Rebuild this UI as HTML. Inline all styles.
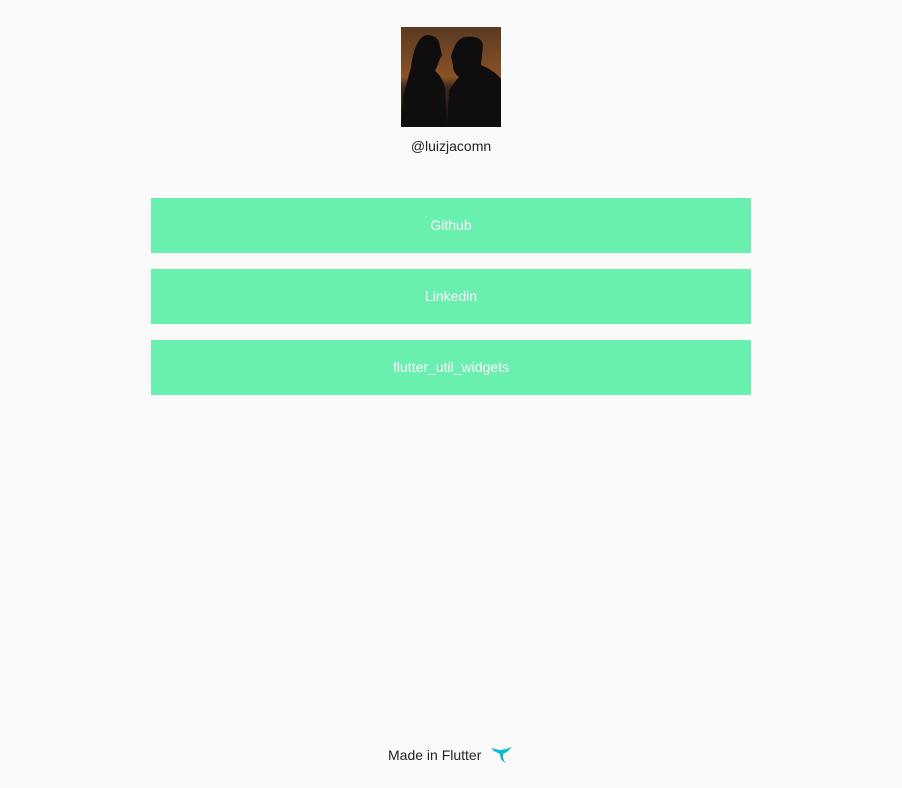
<!DOCTYPE html>
<html><head><meta charset="utf-8"><style>
html,body{margin:0;padding:0;background:#fafafa;width:902px;height:788px;overflow:hidden;font-family:"Liberation Sans",sans-serif;}
.av{position:absolute;left:401px;top:27px;width:100px;height:100px;}
.name{position:absolute;top:138px;left:0;width:902px;text-align:center;font-size:14px;color:#222;}
.btn{position:absolute;left:151px;width:600px;height:55px;background:#69f0ae;color:#fff;font-size:14px;text-align:center;line-height:55px;}
.foot{position:absolute;top:747px;left:388px;font-size:14px;color:#222;}
.bird{position:absolute;left:490px;top:745px;}
</style></head><body>
<svg class="av" viewBox="0 0 100 100">
<defs><linearGradient id="g" x1="0" y1="0" x2="0" y2="1">
<stop offset="0" stop-color="#5a3a22"/><stop offset="0.5" stop-color="#8a5226"/><stop offset="0.6" stop-color="#3a2a1e"/><stop offset="1" stop-color="#1a1512"/></linearGradient></defs>
<rect width="100" height="100" fill="url(#g)"/>
<path d="M0 100 L2 70 Q6 55 10 40 Q14 10 26 8 Q38 8 39 20 L41 28 L38 34 Q36 40 34 44 Q40 48 44 60 L46 100Z" fill="#0f0d0d"/>
<path d="M46 100 L48 64 Q54 54 58 50 Q52 46 52 38 L50 30 Q54 12 64 10 Q80 8 82 18 L80 38 Q94 44 100 52 L100 100Z" fill="#0f0d0d"/>
</svg>
<div class="name">@luizjacomn</div>
<div class="btn" style="top:198px">Github</div>
<div class="btn" style="top:269px">Linkedin</div>
<div class="btn" style="top:340px">flutter_util_widgets</div>
<div class="foot">Made in Flutter</div>
<svg class="bird" width="24" height="20" viewBox="0 0 24 20">
<path d="M1 3 L10 5 L16 4 L22 2 L17 7 L13 9 L13 13 L15 18 L11 14 L10 9 L4 6Z" fill="#13b9d5"/>
<path d="M10 9 L13 9 L13 13 L15 18 L11 14Z" fill="#0fb5a0"/>
</svg>
</body></html>
